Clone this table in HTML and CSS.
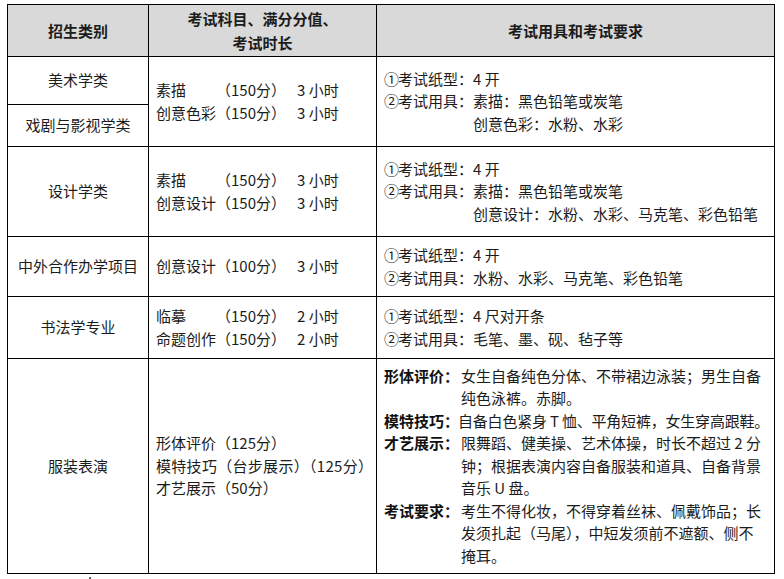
FILE: index.html
```html
<!DOCTYPE html>
<html lang="zh-CN">
<head>
<meta charset="utf-8">
<title>考试科目与要求</title>
<link rel="stylesheet" href="styles.css">
</head>
<body>
<table class="exam">
  <colgroup><col class="c1"><col class="c2"><col class="c3"></colgroup>
  <thead>
    <tr class="r-head">
      <th>招生类别</th>
      <th>考试科目、满分分值、<br>考试时长</th>
      <th>考试用具和考试要求</th>
    </tr>
  </thead>
  <tbody>
    <tr class="r-a">
      <td class="cat">美术学类</td>
      <td class="subj" rowspan="2">
        <div class="sl"><span class="sn">素描</span><span class="sc">（150分）</span><span class="sd">3 小时</span></div>
        <div class="sl"><span class="sn">创意色彩</span><span class="sc">（150分）</span><span class="sd">3 小时</span></div>
      </td>
      <td class="req" rowspan="2">
        <div class="it"><span class="lb"><span class="no">①</span>考试纸型：</span><span class="vl">4 开</span></div>
        <div class="it"><span class="lb"><span class="no">②</span>考试用具：</span><span class="vl">素描：黑色铅笔或炭笔<br>创意色彩：水粉、水彩</span></div>
      </td>
    </tr>
    <tr class="r-b">
      <td class="cat">戏剧与影视学类</td>
    </tr>
    <tr class="r-c">
      <td class="cat">设计学类</td>
      <td class="subj">
        <div class="sl"><span class="sn">素描</span><span class="sc">（150分）</span><span class="sd">3 小时</span></div>
        <div class="sl"><span class="sn">创意设计</span><span class="sc">（150分）</span><span class="sd">3 小时</span></div>
      </td>
      <td class="req">
        <div class="it"><span class="lb"><span class="no">①</span>考试纸型：</span><span class="vl">4 开</span></div>
        <div class="it"><span class="lb"><span class="no">②</span>考试用具：</span><span class="vl">素描：黑色铅笔或炭笔<br>创意设计：水粉、水彩、马克笔、彩色铅笔</span></div>
      </td>
    </tr>
    <tr class="r-d">
      <td class="cat">中外合作办学项目</td>
      <td class="subj">
        <div class="sl"><span class="sn">创意设计</span><span class="sc">（100分）</span><span class="sd">3 小时</span></div>
      </td>
      <td class="req">
        <div class="it"><span class="lb"><span class="no">①</span>考试纸型：</span><span class="vl">4 开</span></div>
        <div class="it"><span class="lb"><span class="no">②</span>考试用具：</span><span class="vl">水粉、水彩、马克笔、彩色铅笔</span></div>
      </td>
    </tr>
    <tr class="r-e">
      <td class="cat">书法学专业</td>
      <td class="subj">
        <div class="sl"><span class="sn">临摹</span><span class="sc">（150分）</span><span class="sd">2 小时</span></div>
        <div class="sl"><span class="sn">命题创作</span><span class="sc">（150分）</span><span class="sd">2 小时</span></div>
      </td>
      <td class="req">
        <div class="it"><span class="lb"><span class="no">①</span>考试纸型：</span><span class="vl">4 尺对开条</span></div>
        <div class="it"><span class="lb"><span class="no">②</span>考试用具：</span><span class="vl">毛笔、墨、砚、毡子等</span></div>
      </td>
    </tr>
    <tr class="r-f">
      <td class="cat">服装表演</td>
      <td class="subj">
        <div>形体评价（125分）</div>
        <div class="wide">模特技巧（台步展示）（125分）</div>
        <div>才艺展示（50分）</div>
      </td>
      <td class="req long">
        <div class="bi"><span class="bl">形体评价：</span><span class="bv">女生自备纯色分体、不带裙边泳装；男生自备<br>纯色泳裤。赤脚。</span></div>
        <div class="bi"><span class="bl tight">模特技巧：</span><span class="bv squeeze">自备白色紧身 T 恤、平角短裤，女生穿高跟鞋。</span></div>
        <div class="bi"><span class="bl">才艺展示：</span><span class="bv">限舞蹈、健美操、艺术体操，时长不超过 2 分<br>钟；根据表演内容自备服装和道具、自备背景<br>音乐 U 盘。</span></div>
        <div class="bi"><span class="bl">考试要求：</span><span class="bv">考生不得化妆，不得穿着丝袜、佩戴饰品；长<br>发须扎起（马尾），中短发须前不遮额、侧不<br>掩耳。</span></div>
      </td>
    </tr>
  </tbody>
</table>
<div class="mark"></div>
</body>
</html>
```

FILE: styles.css
```css
html, body {
  margin: 0;
  padding: 0;
  background: #ffffff;
}

body {
  font-family: "Noto Sans CJK SC", "Noto Sans", sans-serif;
  font-size: 15px;
  color: #1c1c1c;
}

.exam {
  border-collapse: collapse;
  table-layout: fixed;
  width: 767px;
  margin: 4px 0 0 7px;
  border: 1px solid #000;
}

.c1 { width: 141px; }
.c2 { width: 228px; }
.c3 { width: 398px; }

.exam th,
.exam td {
  border: 1px solid #000;
  padding: 0 7px;
  vertical-align: middle;
  line-height: 22.5px;
  font-weight: 400;
}

.exam th {
  background: #d9d9d9;
  font-weight: 700;
  line-height: 24px;
  text-align: center;
}

.r-head { height: 52px; }
.r-a { height: 48px; }
.r-b { height: 42px; }
.r-c { height: 90px; }
.r-d { height: 60px; }
.r-e { height: 62px; }
.r-f { height: 215px; }

.cat {
  text-align: center;
}

.subj {
  text-align: left;
  line-height: 23px;
}

.sl {
  display: flex;
  white-space: nowrap;
}

.sn { width: 60px; flex-shrink: 0; }
.sc { width: 81px; flex-shrink: 0; }

.wide {
  white-space: nowrap;
  letter-spacing: 0.3px;
}

.it {
  display: flex;
  white-space: nowrap;
}

.lb { flex-shrink: 0; }

.no {
  display: inline-block;
  width: 14px;
  text-align: left;
}

.long {
  padding-top: 6px;
  padding-bottom: 6px;
}

.bi {
  display: flex;
  white-space: nowrap;
}

.bl {
  width: 77px;
  flex-shrink: 0;
  font-weight: 700;
  color: #111;
}

.bl.tight {
  width: 74px;
}

.squeeze {
  letter-spacing: -0.2px;
}

.mark {
  width: 2px;
  height: 3px;
  margin: 3px 0 0 89px;
  background: #666;
}
```
